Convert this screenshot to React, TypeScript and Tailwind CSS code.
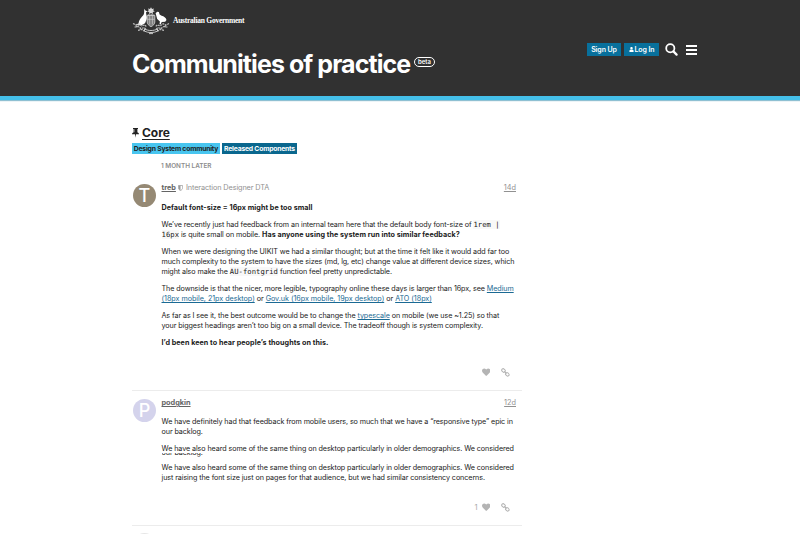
import React from "react";
import { FaUser, FaHeart } from "react-icons/fa";

const INTER = "font-['Inter','Liberation_Sans',sans-serif]";

function Crest() {
  return (
    <svg width="38" height="28" viewBox="0 0 38 28" fill="none" stroke="#d6d6d6">
      <path d="M19 0.2l1 1.8 2-.6-.8 1.9 1.6 1.2-2 .6.1 1.9-1.9-1-1.9 1 .1-1.9-2-.6 1.6-1.2-.8-1.9 2 .6z" fill="#dcdcdc" stroke="none" />
      <path d="M12.2 1.8l1.2 1.6 1.9.8-1.3 1.2.4 2.6c.7 2 .6 3.8-.2 5.6l-1.2 2.6-3 1.8-3.9.5-2-.9 2.4-.7c.3-3 1.4-5.2 3.6-7.4 1.5-1.4 2.1-2.6 2.1-4.6z" fill="#fff" stroke="none" />
      <path d="M23.6 6.2l1.6-1.5 1.7.2.7 2.6 2 1.3c2.4.5 4.2 1.9 4.9 4.1l-1.3 1.8-3.5.3-1 2.5-1.2-.2.4-2.9-2.7-2.4-1.1-3.9z" fill="#fff" stroke="none" />
      <path d="M15.2 8.5h7.6v6.5c0 2-1.5 3.5-3.8 4.7-2.3-1.2-3.8-2.7-3.8-4.7z" fill="#7d7d7d" strokeWidth=".8" />
      <path d="M15.5 12.3h7M17.7 8.5v9M20.4 8.5v9" strokeWidth=".6" />
      <path d="M15.8 7.8h6.4" strokeWidth="1.3" strokeDasharray="1 .5" />
      <path d="M1 16.5l3 1.4 2.7-1.2 2.8 2.2 3.2-1 2 2M37 16.5l-3 1.6-2.9-1.4-2.8 2.2-3-1-2 2M2.5 20l3.8-.4 2.6 2 3.2-1 2.4 2M35.5 20l-3.8-.4-2.6 2-3.2-1-2.4 2M6 23.3l4-.8 2.4 1.9M32 23.3l-4-.8-2.4 1.9M4 18.5l1 2M33.5 18.5l-1 2M8 20.5l1 2.5M29.5 20.5l-1 2.5" stroke="#bdbdbd" strokeWidth="1.2" strokeDasharray="2 .7" />
      <path d="M12.5 22c4 2 9 2 13 0v2.2c-4 1.8-9 1.8-13 0zM17 26.6h4" strokeWidth=".9" />
    </svg>
  );
}

function SearchIcon() {
  return (
    <svg width="13" height="13" viewBox="0 0 13 13" fill="none" stroke="#fff">
      <circle cx="5.3" cy="5.3" r="4.1" strokeWidth="1.8" />
      <path d="M8.4 8.4l3.2 3.2" strokeWidth="2.2" strokeLinecap="round" />
    </svg>
  );
}

function PinIcon() {
  return (
    <svg width="7" height="10" viewBox="0 0 7 10" fill="#222">
      <path d="M1 0h5v1H5.4v3.2C6.4 4.7 7 5.3 7 6.3H4l-.5 3.5L3 6.3H0c0-1 .6-1.6 1.6-2.1V1H1z" />
      <path d="M2.5 1.2v3" stroke="#999" strokeWidth=".6" />
    </svg>
  );
}

function ShieldIcon() {
  return (
    <svg width="5" height="6" viewBox="0 0 5 6">
      <path d="M.4.5h4.2v2.4c0 1.2-.9 2-2.1 2.7C1.3 4.9.4 4.1.4 2.9z" fill="none" stroke="#999" strokeWidth=".7" />
      <path d="M.6.5h1.9v4.9C1.3 4.7.6 4 .6 2.9z" fill="#999" />
    </svg>
  );
}

function ChainIcon() {
  return (
    <svg width="9" height="9" viewBox="0 0 9 9" fill="none" stroke="#b4b4b4" strokeWidth="1">
      <rect x="-1.9" y="-1.4" width="3.8" height="2.8" rx="1.3" transform="translate(2.5 2.5) rotate(45)" />
      <rect x="-1.9" y="-1.4" width="3.8" height="2.8" rx="1.3" transform="translate(6.3 6.3) rotate(45)" />
      <path d="M3.3 3.3l2.2 2.2" />
    </svg>
  );
}

function Link({ children }: { children: React.ReactNode }) {
  return <span className="text-[#1b6a94] underline decoration-[0.6px] underline-offset-[1px]">{children}</span>;
}

function Code({ children }: { children: React.ReactNode }) {
  return <code className="bg-[#f8f8f8] font-['DejaVu_Sans_Mono',monospace] text-[7.2px] leading-none tracking-[0.05px]">{children}</code>;
}

function Strong({ children }: { children: React.ReactNode }) {
  return <b className="font-bold tracking-[0.04px]">{children}</b>;
}

function Para({ lines }: { lines: React.ReactNode[] }) {
  return (
    <p>
      {lines.map((line, i) => (
        <span key={i} className="block h-[10px] whitespace-nowrap leading-[10px]">{line}</span>
      ))}
    </p>
  );
}

function Post({ letter, color, name, role, age, likes, className, bodyClass, children }: {
  letter: string; color: string; name: string; role?: string; age: string; likes?: string; className: string; bodyClass: string; children: React.ReactNode;
}) {
  return (
    <article className={"flex w-[390px] border-b border-[#ececec] " + className}>
      <div className={"mt-[8px] ml-px flex size-[23px] shrink-0 items-center justify-center rounded-full text-[18px] font-medium leading-none text-white " + color}>{letter}</div>
      <div className="ml-[5.5px] flex w-[354.5px] flex-col">
        <div className="mt-[7px] flex h-[10px] items-center text-[7.3px] leading-[10px] text-[#919191]">
          <span className="font-bold text-[#646464] underline decoration-[0.6px] underline-offset-[1px]">{name}</span>
          {role && <span className="ml-[2px] flex items-center gap-[3px] tracking-[-0.11px]"><ShieldIcon />{role}</span>}
          <span className="ml-auto underline decoration-[0.6px] underline-offset-[1px]">{age}</span>
        </div>
        <div className={"flex flex-col gap-[7px] text-[7.2px] tracking-[-0.09px] text-[#222] " + bodyClass}>{children}</div>
        <div className="mt-auto mb-[13px] flex h-[9px] items-center justify-end pr-[6px] text-[7.5px] text-[#aaa]">
          {likes && <span className="mr-[4px]">{likes}</span>}
          <FaHeart size={8.5} color="#b4b4b4" />
          <span className="ml-[11px]"><ChainIcon /></span>
        </div>
      </div>
    </article>
  );
}

export default function App() {
  return (
    <div className={"h-[534px] w-[800px] overflow-hidden bg-white text-[#222] " + INTER}>
      <header className="flex h-[100px] justify-between border-b-4 border-[#44bfe9] bg-[#313131] pl-[132px] shadow-[0_1px_1px_rgba(68,150,180,0.6)]">
        <div className="pt-[7px]">
          <div className="flex h-[28px] items-center">
            <Crest />
            <span className="ml-[3px] font-['Liberation_Serif',serif] text-[7.5px] font-bold leading-none tracking-[-0.25px] text-white">Australian Government</span>
          </div>
          <div className="mt-[13px] flex h-[32px] items-start text-white">
            <h1 className="w-[278px] whitespace-nowrap text-[25px] font-bold leading-[32px] tracking-[-0.93px]">Communities of practice</h1>
            <span className="mt-[9px] ml-[4px] flex h-[10px] w-[21px] items-center justify-center rounded-full border border-white text-[6px] font-semibold leading-none">beta</span>
          </div>
        </div>
        <nav className="mt-[43px] mr-[103px] flex h-[13px] items-center text-[7px] font-semibold leading-none tracking-[-0.1px] text-white">
          <span className="flex h-[13px] w-[34px] items-center justify-center bg-[#08709c]">Sign Up</span>
          <span className="ml-[3px] flex h-[13px] w-[35px] items-center justify-center gap-[1px] bg-[#08709c]"><FaUser size={5} />Log In</span>
          <span className="ml-[6px]"><SearchIcon /></span>
          <span className="ml-[8px] flex flex-col gap-[2px]">
            <i className="h-[2px] w-[11px] bg-white" />
            <i className="h-[2px] w-[11px] bg-white" />
            <i className="h-[2px] w-[11px] bg-white" />
          </span>
        </nav>
      </header>
      <main className="pl-[132px]">
        <div className="mt-[25px] flex h-[16px] items-center gap-[3px]">
          <PinIcon />
          <h2 className="text-[12px] font-bold leading-[16px] tracking-[-0.05px] underline decoration-1 underline-offset-[2px]">Core</h2>
        </div>
        <div className="mt-[2px] flex gap-[2px] text-[6.8px] font-bold leading-[11px] tracking-[-0.2px]">
          <span className="flex h-[11px] w-[88px] justify-center whitespace-nowrap bg-[#48c5ef]">Design System community</span>
          <span className="flex h-[11px] w-[75px] justify-center whitespace-nowrap bg-[#0a678e] text-white">Released Components</span>
        </div>
        <div className="mt-[7px] ml-[29px] h-[10px] text-[6.4px] font-semibold leading-[10px] text-[#8d8d8d]">1 MONTH LATER</div>
        <Post className="mt-[5px] h-[215px]" bodyClass="mt-[10px]" letter="T" color="bg-[#958974]" name="treb" role="Interaction Designer DTA" age="14d">
          <Para lines={[<Strong>Default font-size = 16px might be too small</Strong>]} />
          <Para lines={[
            <>We’ve recently just had feedback from an internal team here that the default body font-size of <Code>1rem |</Code></>,
            <><Code>16px</Code> is quite small on mobile. <Strong>Has anyone using the system run into similar feedback?</Strong></>,
          ]} />
          <Para lines={[
            "When we were designing the UIKIT we had a similar thought; but at the time it felt like it would add far too",
            "much complexity to the system to have the sizes (md, lg, etc) change value at different device sizes, which",
            <>might also make the <Code>AU-fontgrid</Code> function feel pretty unpredictable.</>,
          ]} />
          <Para lines={[
            <>The downside is that the nicer, more legible, typography online these days is larger than 16px, see <Link>Medium</Link></>,
            <span className="tracking-[-0.04px]"><Link>(18px mobile, 21px desktop)</Link> or <Link>Gov.uk (16px mobile, 19px desktop)</Link> or <Link>ATO (18px)</Link></span>,
          ]} />
          <Para lines={[
            <>As far as I see it, the best outcome would be to change the <Link>typescale</Link> on mobile (we use ~1.25) so that</>,
            "your biggest headings aren’t too big on a small device. The tradeoff though is system complexity.",
          ]} />
          <Para lines={[<Strong>I’d been keen to hear people’s thoughts on this.</Strong>]} />
        </Post>
        <Post className="h-[135px]" bodyClass="mt-[9px]" letter="P" color="bg-[#d4d3ec]" name="podgkin" age="12d" likes="1">
          <Para lines={["We have definitely had that feedback from mobile users, so much that we have a “responsive type” epic in", "our backlog."]} />
          <div className="relative h-[12px]">
            <Para lines={["We have also heard some of the same thing on desktop particularly in older demographics. We considered"]} />
            <div className="absolute top-[9px] left-0 h-[4px] overflow-hidden">
              <span className="-mt-[5px] block leading-[10px]">our backlog.</span>
            </div>
          </div>
          <Para lines={[
            "We have also heard some of the same thing on desktop particularly in older demographics. We considered",
            "just raising the font size just on pages for that audience, but we had similar consistency concerns.",
          ]} />
        </Post>
        <div className="mt-[7px] ml-px size-[23px] rounded-full bg-[#e6e6e6]" />
      </main>
    </div>
  );
}
